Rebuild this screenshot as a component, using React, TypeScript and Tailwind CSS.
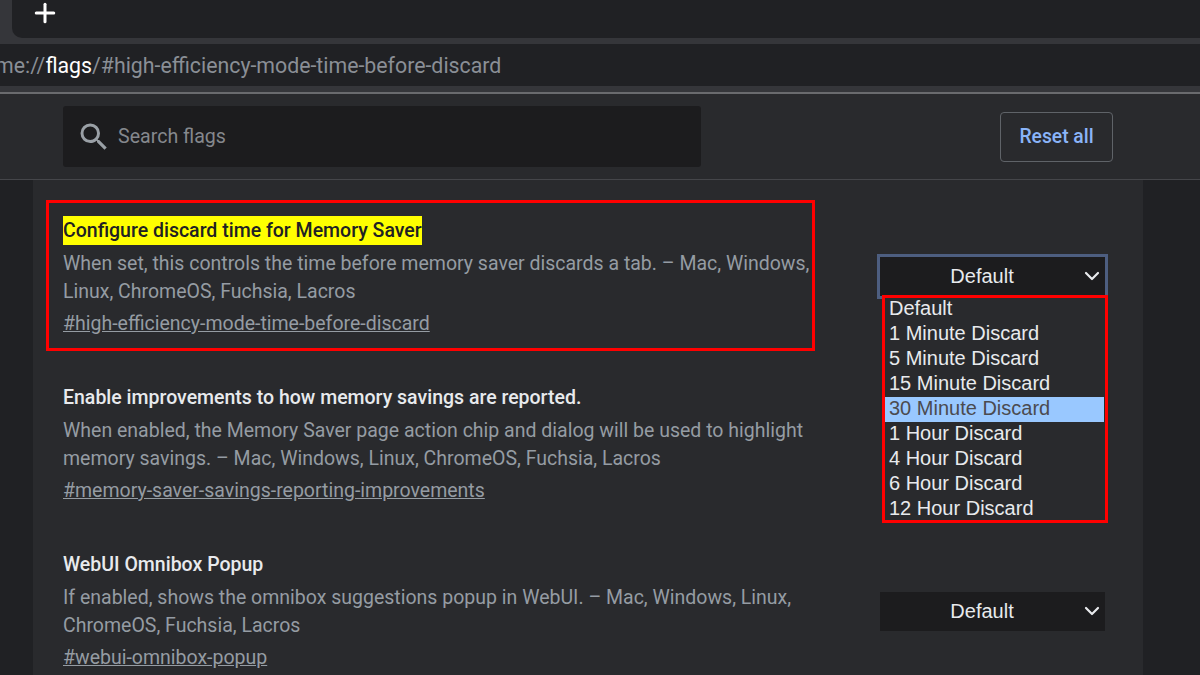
import { ChevronDown, Plus } from "lucide-react";

const options = ["Default", "1 Minute Discard", "5 Minute Discard", "15 Minute Discard", "30 Minute Discard", "1 Hour Discard", "4 Hour Discard", "6 Hour Discard", "12 Hour Discard"];

function FlagSelect({ focused = false }: { focused?: boolean }) {
  return (
    <div className={"flex items-center justify-center relative h-[39px] w-[225px] bg-[#1c1c1e] text-[#e8eaed] text-[20px] leading-[26px] pb-[2px] font-['Liberation_Sans',sans-serif] " + (focused ? "outline-[3px] outline-[#4d5e80]" : "")}>
      <span className="ml-[-21px]">Default</span>
      <ChevronDown className="absolute right-[1px] top-[7px] text-[#e8eaed]" size={24} strokeWidth={2.2} />
    </div>
  );
}

function Flag({ title, desc, line2, hash, highlight = false, className = "" }: { title: string, desc: string, line2: string, hash: string, highlight?: boolean, className?: string }) {
  return (
    <div className={"flex flex-col " + className}>
      <h2 className="h-[28px] text-[19.5px] leading-[28px] font-medium text-[#e8eaed] whitespace-nowrap">
        {highlight
          ? <span className="inline-block -mt-[1px] h-[29px] bg-[#ffff00] leading-[29px] text-[#202124] align-top">{title}</span>
          : title}
      </h2>
      <p className="mt-[5px] text-[19.5px] leading-[28.25px] text-[#959ca3] whitespace-nowrap">{desc}<br />{line2}</p>
      <a className="mt-[3.5px] text-[19.5px] leading-[28px] text-[#959ca3] underline whitespace-nowrap">{hash}</a>
    </div>
  );
}

export default function App() {
  return (
    <div className="h-[675px] w-[1200px] overflow-hidden bg-[#202124] font-['Roboto',sans-serif]">
      <div className="h-[44px] bg-[#35363a] pl-[12px]">
        <div className="flex h-[38px] items-start overflow-hidden rounded-bl-[10px] bg-[#202124] pl-[18px]">
          <Plus className="-mt-[2px] text-white" size={30} strokeWidth={2.4} />
        </div>
      </div>
      <div className="h-[42px] overflow-hidden bg-[#202124] pt-[1px] text-[21.3px] leading-[42px] text-[#8a8f96] whitespace-nowrap">
        <div className="-ml-[5px]">me://<span className="text-white">flags</span>/#high-efficiency-mode-time-before-discard</div>
      </div>
      <div className="h-[6px] bg-[#35363a]" />
      <div className="h-[2px] bg-[#6a6b6e]" />
      <div className="flex h-[86px] items-center justify-between border-b border-[#45464a] bg-[#292a2d] pl-[63px] pr-[87px]">
        <div className="flex h-[61px] w-[638px] items-center gap-[6.5px] rounded-[3px] bg-[#1c1c1e] pl-[12.5px]">
          <svg width="36" height="36" viewBox="0 0 24 24" fill="#9aa0a6">
            <path d="M15.5 14h-.79l-.28-.27A6.471 6.471 0 0 0 16 9.5 6.5 6.5 0 1 0 9.5 16c1.61 0 3.09-.59 4.23-1.57l.27.28v.79l5 4.99L20.49 19l-4.99-5zm-6 0C7.01 14 5 11.99 5 9.5S7.01 5 9.5 5 14 7.01 14 9.5 11.99 14 9.5 14z" />
          </svg>
          <span className="text-[19.6px] text-[#85888d]">Search flags</span>
        </div>
        <button className="mt-[1px] h-[50px] w-[113px] rounded-[4px] border border-[#5f6368] text-[19.3px] font-medium text-[#8ab4f8]">Reset all</button>
      </div>
      <div className="relative ml-[33px] mr-[57px] h-[495px] bg-[#292a2d]">
        <div className="flex flex-col pl-[30px]">
          <Flag className="mt-[37px]" highlight
            title="Configure discard time for Memory Saver"
            desc="When set, this controls the time before memory saver discards a tab. – Mac, Windows,"
            line2="Linux, ChromeOS, Fuchsia, Lacros"
            hash="#high-efficiency-mode-time-before-discard" />
          <Flag className="mt-[46px]"
            title="Enable improvements to how memory savings are reported."
            desc="When enabled, the Memory Saver page action chip and dialog will be used to highlight"
            line2="memory savings. – Mac, Windows, Linux, ChromeOS, Fuchsia, Lacros"
            hash="#memory-saver-savings-reporting-improvements" />
          <Flag className="mt-[46px]"
            title="WebUI Omnibox Popup"
            desc="If enabled, shows the omnibox suggestions popup in WebUI. – Mac, Windows, Linux,"
            line2="ChromeOS, Fuchsia, Lacros"
            hash="#webui-omnibox-popup" />
        </div>

        {/* red annotation over the first flag */}
        <div className="absolute left-[13px] top-[20px] h-[151px] w-[769px] border-[3px] border-[#ff0000]" />

        <div className="absolute left-[847px] top-[77px]"><FlagSelect focused /></div>
        <div className="absolute left-[847px] top-[412px]"><FlagSelect /></div>

        <div className="absolute left-[849px] top-[115px] h-[228px] w-[226px] overflow-hidden border-[3px] border-[#ff0000] bg-[#292a2d] pr-[1px] font-['Liberation_Sans',sans-serif] text-[20px] leading-[23px] text-[#e8eaed]">
          <div className="-mt-[1px]">
            {options.map(o => (
              <div key={o} className={"h-[25px] pl-[4px] " + (o === "30 Minute Discard" ? "bg-[#99c8ff] text-[#4b4b4f]" : "")}>{o}</div>
            ))}
          </div>
        </div>
      </div>
    </div>
  );
}
